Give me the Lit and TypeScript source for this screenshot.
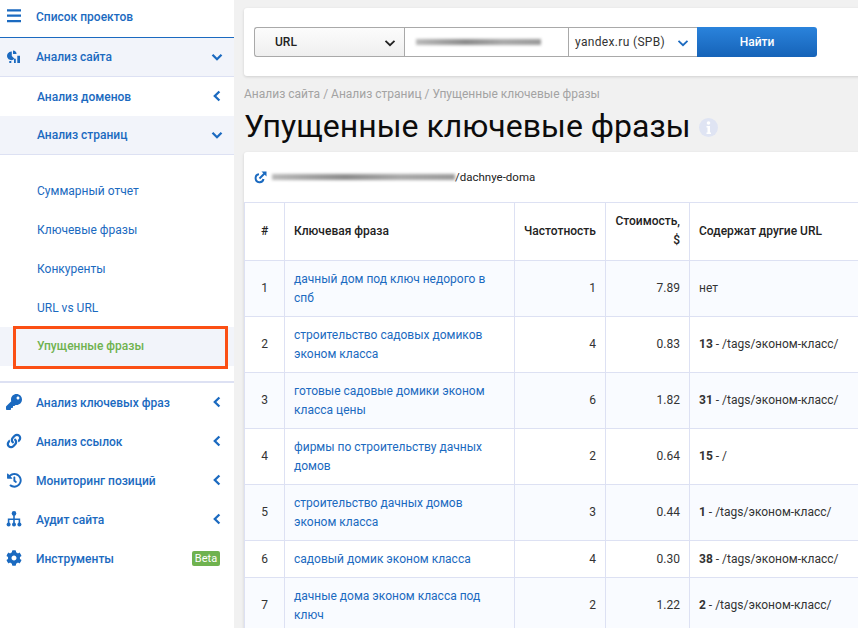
import { LitElement, html, css, svg } from "lit";
import { customElement } from "lit/decorators.js";

const chevDown = html`<svg class="chev" width="12" height="12" viewBox="0 0 12 12"><path d="M1.5 3.8 6 8.2l4.5-4.4" fill="none" stroke="#1b6ac0" stroke-width="2.3"/></svg>`;
const chevLeft = html`<svg class="chev" width="12" height="12" viewBox="0 0 12 12"><path d="M8.4 1.5 3.8 6l4.6 4.5" fill="none" stroke="#1b6ac0" stroke-width="2.3"/></svg>`;

const icons: Record<string, unknown> = {
  menu: svg`<path d="M1 1.2h14v2.2H1zM1 6.600h14v2.200H1zM1 12h14v2.200H1z"/>`,
  site: svg`<path d="M5.800 2.600A4.300 4.300 0 1 0 8.500 9.800L5.800 7z"/><path d="M7 1.600a3.800 3.800 0 0 1 3.600 3.400H7z"/><path d="M3.300 12h2v2h-2zM8 9.800h1.800V14H8zM11.300 6.800H14V14h-2.700z"/>`,
  key: svg`<g transform="scale(.03125)"><path d="M512 176.001C512 273.203 433.202 352 336 352c-11.22 0-22.19-1.062-32.827-3.069l-24.012 27.014A23.999 23.999 0 0 1 261.223 384H224v40c0 13.255-10.745 24-24 24h-40v40c0 13.255-10.745 24-24 24H24c-13.255 0-24-10.745-24-24v-78.059c0-6.365 2.529-12.47 7.029-16.971l161.802-161.802C163.108 213.814 160 195.271 160 176 160 78.798 238.797.001 335.999 0 433.488-.001 512 78.511 512 176.001zM336 128c0 26.51 21.49 48 48 48s48-21.49 48-48-21.49-48-48-48-48 21.49-48 48z"/></g>`,
  link: svg`<g transform="translate(.7 .7) scale(.0285)"><path d="M326.612 185.391c59.747 59.809 58.927 155.698.36 214.59-.11.12-.24.25-.36.37l-67.2 67.2c-59.27 59.27-155.699 59.262-214.96 0-59.27-59.26-59.27-155.7 0-214.96l37.106-37.106c9.84-9.84 26.786-3.3 27.294 10.606.648 17.722 3.826 35.527 9.69 52.721 1.986 5.822.567 12.262-3.783 16.612l-13.087 13.087c-28.026 28.026-28.905 73.66-1.155 101.96 28.024 28.579 74.086 28.749 102.325.51l67.2-67.19c28.191-28.191 28.073-73.757 0-101.83-3.701-3.694-7.429-6.564-10.341-8.569a16.037 16.037 0 0 1-6.947-12.606c-.396-10.567 3.348-21.456 11.698-29.806l21.054-21.055c5.521-5.521 14.182-6.199 20.584-1.731a152.482 152.482 0 0 1 20.522 17.197zM467.547 44.449c-59.261-59.262-155.69-59.27-214.96 0l-67.2 67.2c-.12.12-.25.25-.36.37-58.566 58.892-59.387 154.781.36 214.59a152.454 152.454 0 0 0 20.521 17.196c6.402 4.468 15.064 3.789 20.584-1.731l21.054-21.055c8.35-8.35 12.094-19.239 11.698-29.806a16.037 16.037 0 0 0-6.947-12.606c-2.912-2.005-6.64-4.875-10.341-8.569-28.073-28.073-28.191-73.639 0-101.83l67.2-67.19c28.239-28.239 74.3-28.069 102.325.51 27.75 28.3 26.872 73.934-1.155 101.96l-13.087 13.087c-4.35 4.35-5.769 10.79-3.783 16.612 5.864 17.194 9.042 34.999 9.69 52.721.509 13.906 17.454 20.446 27.294 10.606l37.106-37.106c59.271-59.259 59.271-155.699.001-214.959z"/></g>`,
  history: svg`<g transform="translate(.8 .8) scale(.0295)"><path d="M504 255.531c.253 136.64-111.18 248.372-247.82 248.468-59.015.042-113.223-20.53-155.822-54.911-11.077-8.94-11.905-25.541-1.839-35.607l11.267-11.267c8.609-8.609 22.353-9.551 31.891-1.984C173.062 425.135 212.781 440 256 440c101.705 0 184-82.311 184-184 0-101.705-82.311-184-184-184-48.814 0-93.149 18.969-126.068 49.932l50.754 50.754c10.08 10.08 2.941 27.314-11.313 27.314H24c-8.837 0-16-7.163-16-16V38.627c0-14.254 17.234-21.393 27.314-11.314l49.372 49.372C129.209 34.136 189.552 8 256 8c136.81 0 247.747 110.78 248 247.531zm-180.912 78.784l9.823-12.63c8.138-10.463 6.253-25.542-4.21-33.679L288 256.349V152c0-13.255-10.745-24-24-24h-16c-13.255 0-24 10.745-24 24v135.651l65.409 50.874c10.463 8.137 25.541 6.253 33.679-4.21z"/></g>`,
  tree: svg`<circle cx="8" cy="2.400" r="2.300"/><circle cx="2.600" cy="13.400" r="2"/><circle cx="8" cy="13.400" r="2"/><circle cx="13.400" cy="13.400" r="2"/><path d="M7.200 4h1.600v3.400h5.400V12h-1.600V9H8.800v3H7.200V9H3.400v3H1.800V7.400h5.400z"/>`,
  cog: svg`<g transform="scale(.03125)"><path d="M487.4 315.7l-42.6-24.6c4.3-23.2 4.3-47 0-70.2l42.6-24.6c4.9-2.8 7.1-8.6 5.5-14-11.1-35.6-30-67.8-54.7-94.6-3.8-4.1-10-5.1-14.8-2.3L380.8 110c-17.9-15.4-38.5-27.3-60.8-35.1V25.8c0-5.6-3.9-10.5-9.4-11.7-36.7-8.2-74.3-7.8-109.2 0-5.5 1.2-9.4 6.1-9.4 11.7V75c-22.2 7.9-42.8 19.8-60.8 35.1L88.7 85.5c-4.9-2.8-11-1.9-14.8 2.3-24.7 26.7-43.6 58.9-54.7 94.6-1.7 5.4.6 11.2 5.5 14L67.3 221c-4.3 23.2-4.3 47 0 70.2l-42.6 24.6c-4.9 2.8-7.1 8.6-5.5 14 11.1 35.6 30 67.8 54.7 94.6 3.8 4.1 10 5.1 14.8 2.3l42.6-24.6c17.9 15.4 38.5 27.3 60.8 35.1v49.2c0 5.6 3.9 10.5 9.4 11.7 36.7 8.2 74.3 7.8 109.2 0 5.5-1.2 9.4-6.1 9.4-11.7v-49.2c22.2-7.9 42.8-19.8 60.8-35.1l42.6 24.6c4.9 2.8 11 1.9 14.8-2.3 24.7-26.7 43.6-58.9 54.7-94.6 1.5-5.5-.7-11.3-5.6-14.1zM256 336c-44.1 0-80-35.9-80-80s35.9-80 80-80 80 35.9 80 80-35.9 80-80 80z"/></g>`,
};
const ic = (n: string) => html`<svg class="ic" width="16" height="16" viewBox="0 0 16 16" fill="#1b6ac0">${icons[n]}</svg>`;

const rows: [string, string, string, string, string, string, boolean][] = [
  ["1", "дачный дом под ключ недорого в спб", "1", "7.89", "", "нет", false],
  ["2", "строительство садовых домиков эконом класса", "4", "0.83", "13", " - /tags/эконом-класс/", false],
  ["3", "готовые садовые домики эконом класса цены", "6", "1.82", "31", " - /tags/эконом-класс/", false],
  ["4", "фирмы по строительству дачных домов", "2", "0.64", "15", " - /", false],
  ["5", "строительство дачных домов эконом класса", "3", "0.44", "1", " - /tags/эконом-класс/", false],
  ["6", "садовый домик эконом класса", "4", "0.30", "38", " - /tags/эконом-класс/", true],
  ["7", "дачные дома эконом класса под ключ", "2", "1.22", "2", " - /tags/эконом-класс/", false],
];

@customElement("app-root")
export class AppRoot extends LitElement {
  static styles = css`
    :host { display: block; width: 858px; height: 628px; overflow: hidden; background: #f1f1f1; font-family: Roboto, "Liberation Sans", sans-serif; color: #222; }
    * { box-sizing: border-box; }
    .page { display: flex; height: 628px; }
    .side { width: 234px; flex: none; background: #fff; position: relative; color: #1b6ac0; font-size: 12px; font-weight: 500; }
    .item { height: 39px; display: flex; align-items: center; padding: 0 12px 0 36px; position: relative; }
    .item .ic { position: absolute; left: 6px; top: 11px; }
    .item .chev { position: absolute; right: 11px; top: 13px; }
    .top { height: 38px; border-bottom: 1px solid #1b6ac0; padding-bottom: 3px; }
    .top .ic { top: 8px; }
    .tint { background: #f2f4fa; border-bottom: 1px solid #dde1f3; }
    .sub { padding-left: 37px; }
    .subs { padding-top: 16px; padding-bottom: 15px; border-bottom: 2px solid #dde1f3; }
    .leaf { padding-left: 37px; font-weight: 400; }
    .active { background: #f2f4fa; color: #6fb24f; font-weight: 500; padding-bottom: 2px; }
    .mark { position: absolute; left: 13px; top: -1px; right: 6px; bottom: -3px; border: 3px solid #fb4f14; pointer-events: none; }
    .beta { position: absolute; right: 14px; top: 12px; width: 28px; height: 15px; text-align: center; background: #6fb24f; color: #fff; font-size: 11px; font-weight: 400; line-height: 15px; border-radius: 2px; }

    .main { flex: 1; min-width: 0; padding: 8px 0 0 10px; overflow: hidden; }
    .card { background: #fff; width: 640px; border-radius: 3px 0 0 3px; box-shadow: 0 1px 3px rgba(0,0,0,.14); }
    .search { height: 68px; padding: 19px 0 0 10px; }
    .form { display: flex; width: 563px; height: 30px; font-size: 12px; }
    .f { height: 30px; display: flex; align-items: center; border: 1px solid #a9a9a9; border-right: 0; position: relative; }
    .f1 { width: 150px; border-radius: 3px 0 0 3px; background: linear-gradient(#fcfcfc, #efefef); padding-left: 20px; font-weight: 500; color: #222; }
    .f1 svg, .f3 svg { position: absolute; right: 8px; top: 9px; }
    .f2 { width: 164px; background: #fff; padding-left: 11px; }
    .blur { height: 6px; background: linear-gradient(90deg, #b9b9b9, #8a8a8a 40%, #a8a8a8 70%, #999); filter: blur(1.4px); }
    .wide { width: 125px; }
    .f3 { width: 129px; background: #fff; padding-left: 6px; color: #333; letter-spacing: .33px; }
    .btn { flex: 1; background: linear-gradient(#2a83dc, #1663b8); color: #fff; border-radius: 0 3px 3px 0; display: flex; align-items: center; justify-content: center; font-weight: 500; }

    .crumbs { font-size: 12px; color: #a3a3a3; margin-top: 11px; line-height: 15px; }
    h1 { margin: 2px 0 0; font-size: 32px; line-height: 44px; font-weight: 400; color: #0c0c0c; display: flex; align-items: center; gap: 9px; }
    .info { width: 19px; height: 19px; margin-top: 3px; }

    .card2 { margin-top: 4px; height: 600px; overflow: hidden; }
    .url { height: 50px; display: flex; align-items: center; padding-left: 10px; font-size: 11.5px; color: #222; }
    .url .blur { width: 183px; height: 6px; margin-left: 5px; }

    table { border-collapse: collapse; table-layout: fixed; width: 640px; font-size: 12px; }
    col.c1 { width: 40px; } col.c2 { width: 230px; } col.c3 { width: 91px; } col.c4 { width: 84px; }
    th, td { border: 1px solid #dde1f3; padding: 0 9px; line-height: 19px; }
    th { height: 58px; text-align: left; font-weight: 500; color: #222; padding-bottom: 1px; }
    td { height: 56px; color: #333; }
    tbody tr:nth-child(odd) td { background: #f9fbff; }
    .num { text-align: right; }
    .c { text-align: center; }
    a { color: #1b6ac0; text-decoration: none; }
    tr.short td { height: 37px; }
    b { font-weight: 700; }
  `;

  render() {
    return html`<div class="page">
      <aside class="side">
        <div class="item top">${ic("menu")}Список проектов</div>
        <div class="item tint">${ic("site")}Анализ сайта${chevDown}</div>
        <div class="item sub">Анализ доменов${chevLeft}</div>
        <div class="item sub tint">Анализ страниц${chevDown}</div>
        <div class="subs">
          <div class="item leaf">Суммарный отчет</div>
          <div class="item leaf">Ключевые фразы</div>
          <div class="item leaf">Конкуренты</div>
          <div class="item leaf">URL vs URL</div>
          <div class="item leaf active">Упущенные фразы<span class="mark"></span></div>
        </div>
        <div class="item">${ic("key")}Анализ ключевых фраз${chevLeft}</div>
        <div class="item">${ic("link")}Анализ ссылок${chevLeft}</div>
        <div class="item">${ic("history")}Мониторинг позиций${chevLeft}</div>
        <div class="item">${ic("tree")}Аудит сайта${chevLeft}</div>
        <div class="item">${ic("cog")}Инструменты<span class="beta">Beta</span></div>
      </aside>
      <main class="main">
        <div class="card search">
          <div class="form">
            <div class="f f1">URL<svg width="12" height="12" viewBox="0 0 12 12"><path d="M1.500 3.800 6 8.200l4.500-4.400" fill="none" stroke="#222" stroke-width="1.800"/></svg></div>
            <div class="f f2"><div class="blur wide"></div></div>
            <div class="f f3">yandex.ru (SPB)<svg width="12" height="12" viewBox="0 0 12 12"><path d="M1.500 3.800 6 8.200l4.500-4.400" fill="none" stroke="#1b6ac0" stroke-width="1.800"/></svg></div>
            <div class="btn">Найти</div>
          </div>
        </div>
        <div class="crumbs">Анализ сайта / Анализ страниц / Упущенные ключевые фразы</div>
        <h1>Упущенные ключевые фразы
          <svg class="info" viewBox="0 0 19 19"><circle cx="9.500" cy="9.500" r="9.500" fill="#dfe4f3"/><circle cx="9.500" cy="5" r="1.800" fill="#fff"/><path d="M7.500 8h3.500v6.500h1V16H7.500v-1.500h1V9.500h-1z" fill="#fff"/></svg>
        </h1>
        <div class="card card2">
          <div class="url">
            <svg width="13" height="13" viewBox="0 0 13 13"><path d="M9.500 8a4 4 0 1 1-4.500-4.800" fill="none" stroke="#1b6ac0" stroke-width="2"/><path d="M5.500 7.500 11 2" stroke="#1b6ac0" stroke-width="2"/><path d="M7.500 .5h5v5z" fill="#1b6ac0"/></svg>
            <div class="blur"></div>/dachnye-doma
          </div>
          <table>
            <colgroup><col class="c1"/><col class="c2"/><col class="c3"/><col class="c4"/><col/></colgroup>
            <thead><tr><th class="c">#</th><th>Ключевая фраза</th><th>Частотность</th><th class="num">Стоимость, $</th><th>Содержат другие URL</th></tr></thead>
            <tbody>
              ${rows.map((r) => html`<tr class=${r[6] ? "short" : ""}>
                <td class="c">${r[0]}</td><td><a>${r[1]}</a></td><td class="num">${r[2]}</td><td class="num">${r[3]}</td>
                <td>${r[4] ? html`<b>${r[4]}</b>` : ""}${r[5]}</td></tr>`)}
            </tbody>
          </table>
        </div>
      </main>
    </div>`;
  }
}
